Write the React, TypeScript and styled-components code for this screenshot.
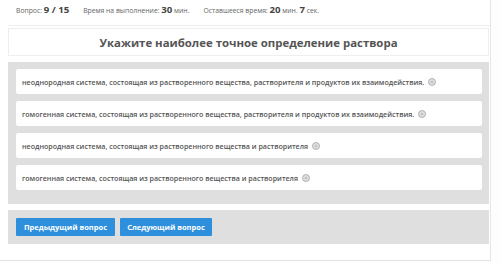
import React from "react";
import styled, { createGlobalStyle } from "styled-components";

const GlobalStyle = createGlobalStyle`
    body {
        margin: 0;
        background: #fdfdfd;
        font-family: "Open Sans", "DejaVu Sans", sans-serif;
        color: #555;
    }
`;

const Page = styled.div`
    width: 491px;
    height: 261px;
    border-right: 1px solid #e6e6e6;
    border-bottom: 1px solid #e2e2e2;
    box-sizing: border-box;
    background: #fff;
`;

const InfoBar = styled.div`
    display: flex;
    align-items: baseline;
    gap: 14px;
    height: 26px;
    padding: 3px 0 0 8px;
    box-sizing: border-box;
    margin-left: 8px;
    border-bottom: 1px solid #eee;
    font-size: 6.8px;
    color: #666;
`;

const InfoItem = styled.span``;

const Num = styled.b`
    font-size: 9.6px;
    font-weight: 700;
    color: #444;
`;

const Body = styled.div`
    padding: 2px 1px 0 8px;
    box-sizing: border-box;
`;

const TitleBox = styled.div`
    height: 26px;
    border: 1px solid #eee;
    background: #fff;
    display: flex;
    align-items: center;
    justify-content: center;
    font-size: 11.4px;
    font-weight: 700;
    color: #555;
    margin-bottom: 6px;
`;

const Panel = styled.div<{ $pad: string }>`
    background: #dfdfdf;
    padding: ${(p) => p.$pad};
    display: flex;
    flex-direction: column;
    gap: 7px;
`;

const Answer = styled.label`
    height: 25px;
    background: #fff;
    display: flex;
    align-items: center;
    padding-left: 6px;
    gap: 4px;
    font-size: 7.1px;
    font-weight: 600;
    color: #555;
    border-radius: 2px;
`;

const Radio = styled.span`
    width: 8px;
    height: 8px;
    border-radius: 50%;
    background: #c4c4c4;
    border: 1px solid #b8b8b8;
    box-sizing: border-box;
    box-shadow: inset 0 0 0 1.5px #e2e2e2;
    flex: none;
`;

const Gap = styled.div`
    height: 6px;
`;

const Buttons = styled.div`
    display: flex;
    gap: 5px;
`;

const Button = styled.button<{ $w: number }>`
    width: ${(p) => p.$w}px;
    height: 18px;
    background: #2e8fdc;
    border: none;
    border-radius: 1px;
    color: #fff;
    font-family: "Open Sans", "DejaVu Sans", sans-serif;
    font-size: 7.5px;
    font-weight: 700;
    padding: 0;
`;

const answers = [
    "неоднородная система, состоящая из растворенного вещества, растворителя и продуктов их взаимодействия.",
    "гомогенная система, состоящая из растворенного вещества, растворителя и продуктов их взаимодействия.",
    "неоднородная система, состоящая из растворенного вещества и растворителя",
    "гомогенная система, состоящая из растворенного вещества и растворителя",
];

export default function App() {
    return (
        <Page>
            <GlobalStyle />
            <InfoBar>
                <InfoItem>
                    Вопрос: <Num>9 / 15</Num>
                </InfoItem>
                <InfoItem>
                    Время на выполнение: <Num>30</Num> мин.
                </InfoItem>
                <InfoItem>
                    Оставшееся время: <Num>20</Num> мин. <Num>7</Num> сек.
                </InfoItem>
            </InfoBar>
            <Body>
                <TitleBox>Укажите наиболее точное определение раствора</TitleBox>
                <Panel $pad="7px 7px 14px 8px">
                    {answers.map((a, i) => (
                        <Answer key={i}>
                            {a}
                            <Radio />
                        </Answer>
                    ))}
                </Panel>
                <Gap />
                <Panel $pad="8px">
                    <Buttons>
                        <Button $w={99}>Предыдущий вопрос</Button>
                        <Button $w={92}>Следующий вопрос</Button>
                    </Buttons>
                </Panel>
            </Body>
        </Page>
    );
}
